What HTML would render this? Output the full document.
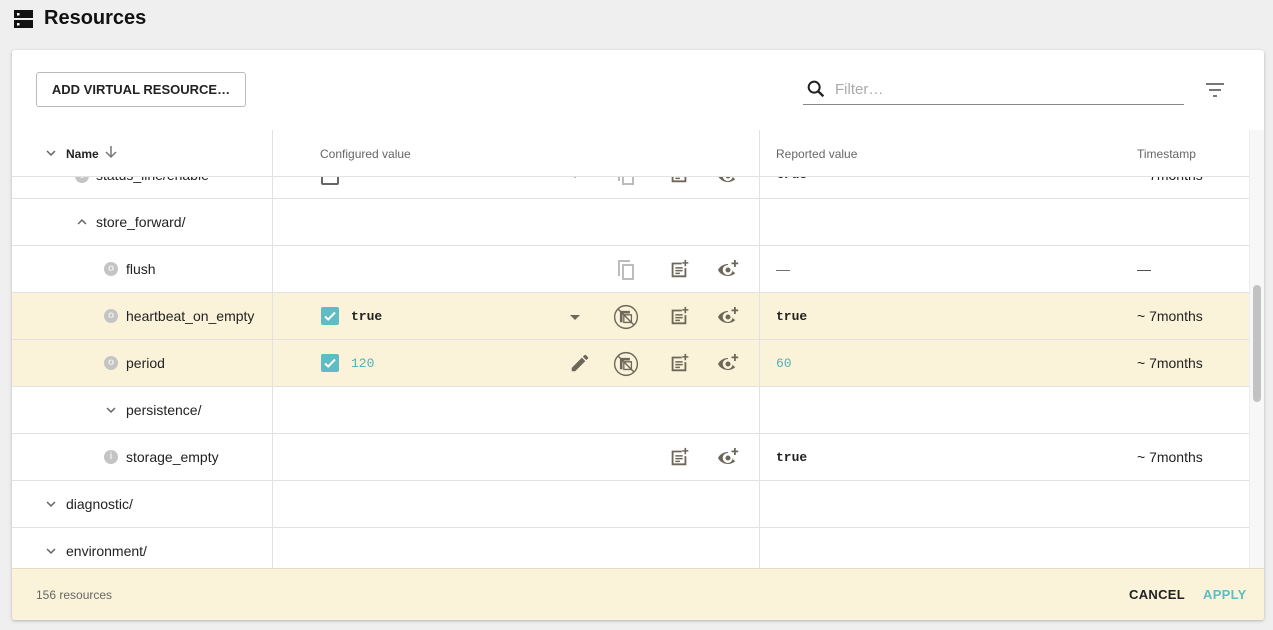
<!DOCTYPE html>
<html><head><meta charset="utf-8"><style>
*{box-sizing:border-box;margin:0;padding:0}
body{width:1273px;height:630px;background:#efefef;font-family:"Liberation Sans",Arial,sans-serif;color:#222;position:relative;overflow:hidden}
.abs{position:absolute}
.title{left:44px;top:7px;font-size:20px;font-weight:bold;color:#111}
.card{left:12px;top:50px;width:1252px;height:570px;background:#fff;border-radius:3px;box-shadow:0 1px 3px rgba(0,0,0,.25);overflow:hidden}
.btn{left:24px;top:22px;width:210px;height:35px;border:1px solid #bbb;border-radius:3px;font-size:13px;font-weight:bold;letter-spacing:0;color:#222;text-align:center;line-height:33px}
.hdr{font-size:12px;color:#666}
.row{position:absolute;left:0;width:1237px;height:47px;border-bottom:1px solid #e2e2e2}
.row.hl{background:#fbf3d9}
.t{position:absolute;top:0;line-height:46px;font-size:14px;color:#222}
.mono{font-family:"Liberation Mono",monospace;font-size:13px;font-weight:bold}
.teal{color:#4fb0b8;font-weight:normal}
.vl{position:absolute;top:0;width:1px;background:#e2e2e2}
.ic{position:absolute}
.cb{position:absolute;width:18px;height:18px;background:#5fbcc4;border-radius:2px;top:14px;left:309px}
.dot{position:absolute;width:14px;height:14px;border-radius:50%;background:#c4c4c4;top:16px;color:#eee;font-size:10px;font-weight:bold;text-align:center;line-height:14px}
.foot{left:0;top:518px;width:1252px;height:52px;background:#fbf3d9;border-top:1px solid #e6dcc0}
</style></head><body>
<svg width="0" height="0" style="position:absolute">
<defs>
<symbol id="chevd" viewBox="0 0 24 24"><path d="M7.4 8.6 12 13.2l4.6-4.6L18 10l-6 6-6-6z" fill="#666"/></symbol>
<symbol id="chevu" viewBox="0 0 24 24"><path d="M7.4 15.4 12 10.8l4.6 4.6L18 14l-6-6-6 6z" fill="#666"/></symbol>
<symbol id="note" viewBox="0 0 24 24"><path d="M4 5h11v2H6v12h12v-8h2v10H4z M8 10h8v1.6H8z M8 13h8v1.6H8z M8 16h5v1.6H8z M18 2h1.8v2.5h2.4v1.7h-2.4V9H18V6.2h-2.5V4.5H18z" fill="#6d6759"/></symbol>
<symbol id="eye" viewBox="0 0 24 24"><path d="M12 7C7 7 3.5 10 2 13c1.5 3 5 6 10 6 3 0 5.5-1.2 7.3-3-1.3-.4-2.3-1.4-2.6-2.7A5 5 0 1 1 12 8z M12 10.5a2.5 2.5 0 1 0 0 5 2.5 2.5 0 0 0 0-5z" fill="#6d6759"/><path d="M18 3h1.8v2.5h2.4v1.7h-2.4V10H18V7.2h-2.5V5.5H18z" fill="#6d6759"/></symbol>
<symbol id="copy" viewBox="0 0 24 24"><path d="M4 4h2v14H4z M4 2h12v2H4z M8 6h12v16H8z M10 8v12h8V8z" fill="#bdbdbd"/></symbol>
<symbol id="nocopy" viewBox="0 0 24 24"><circle cx="12" cy="12" r="10.5" fill="none" stroke="#6d6759" stroke-width="1.3"/><path d="M7 7h8v1.2H8.2v8H7z M10 10h7v7h-7z" fill="none" stroke="#6d6759" stroke-width="1.2"/><path d="M5 5l14 14" stroke="#6d6759" stroke-width="1.3"/></symbol>
<symbol id="pen" viewBox="0 0 24 24"><path d="M3 17.25V21h3.75L17.8 9.94l-3.75-3.75zM20.7 7.04a1 1 0 0 0 0-1.41l-2.34-2.34a1 1 0 0 0-1.41 0l-1.83 1.83 3.75 3.75z" fill="#6d6759"/></symbol>
<symbol id="drop" viewBox="0 0 24 24"><path d="M7 10l5 5 5-5z" fill="#6d6759"/></symbol>
</defs></svg>

<svg class="abs" style="left:14px;top:9px" width="20" height="20" viewBox="0 0 20 20"><rect x="0" y="1" width="19" height="8" fill="#111"/><rect x="0" y="11" width="19" height="8" fill="#111"/><rect x="3" y="4" width="2.5" height="2.5" fill="#fff"/><rect x="3" y="14" width="2.5" height="2.5" fill="#fff"/></svg>
<div class="abs title">Resources</div>

<div class="abs card">
  <div class="abs btn">ADD VIRTUAL RESOURCE…</div>
  <svg class="abs" style="left:793px;top:28px" width="22" height="22" viewBox="0 0 24 24"><circle cx="10" cy="10" r="6" fill="none" stroke="#222" stroke-width="2.2"/><path d="M14.5 14.5 20 20" stroke="#222" stroke-width="2.6"/></svg>
  <div class="abs" style="left:823px;top:31px;font-size:15px;color:#aaa">Filter…</div>
  <div class="abs" style="left:791px;top:54px;width:381px;height:1px;background:#888"></div>
  <svg class="abs" style="left:1192px;top:30px" width="24" height="20" viewBox="0 0 24 20"><rect x="2" y="3" width="18" height="2" fill="#777"/><rect x="5" y="9" width="12" height="2" fill="#777"/><rect x="9" y="15" width="4" height="2" fill="#777"/></svg>

  <div class="abs" style="left:0;top:127px;width:1237px;height:391px;overflow:hidden">
    <div class="row" style="top:-25px">
      <div class="dot" style="left:63px;top:17px">o</div><div class="t" style="left:84px">status_line/enable</div>
      <div class="abs" style="left:309px;top:15px;width:18px;height:18px;border:2px solid #666;border-radius:2px"></div>
      <svg class="ic" style="left:551px;top:11px" width="24" height="24"><use href="#drop"/></svg>
      <svg class="ic" style="left:602px;top:11px" width="24" height="24"><use href="#copy"/></svg>
      <svg class="ic" style="left:656px;top:11px" width="22" height="22"><use href="#note"/></svg>
      <svg class="ic" style="left:704px;top:11px" width="24" height="24"><use href="#eye"/></svg>
      <div class="t mono" style="left:764px">true</div><div class="t" style="left:1125px">~ 7months</div>
    </div>
    <div class="row" style="top:22px"><svg class="ic" style="left:61px;top:14px" width="18" height="18"><use href="#chevu"/></svg><div class="t" style="left:84px">store_forward/</div></div>
    <div class="row" style="top:69px">
      <div class="dot" style="left:92px">o</div><div class="t" style="left:114px">flush</div>
      <svg class="ic" style="left:602px;top:12px" width="24" height="24"><use href="#copy"/></svg>
      <svg class="ic" style="left:656px;top:12px" width="22" height="22"><use href="#note"/></svg>
      <svg class="ic" style="left:704px;top:11px" width="24" height="24"><use href="#eye"/></svg>
      <div class="t" style="left:764px;color:#666">—</div><div class="t" style="left:1125px;color:#444">—</div>
    </div>
    <div class="row hl" style="top:116px">
      <div class="dot" style="left:92px">o</div><div class="t" style="left:114px">heartbeat_on_empty</div>
      <div class="cb"><svg width="18" height="18" viewBox="0 0 18 18"><path d="M4 9.5l3.2 3L14 5.5" fill="none" stroke="#fff" stroke-width="2"/></svg></div>
      <div class="t mono" style="left:339px;top:1px">true</div>
      <svg class="ic" style="left:551px;top:12px" width="24" height="24"><use href="#drop"/></svg>
      <svg class="ic" style="left:601px;top:11px" width="26" height="26"><use href="#nocopy"/></svg>
      <svg class="ic" style="left:656px;top:12px" width="22" height="22"><use href="#note"/></svg>
      <svg class="ic" style="left:704px;top:11px" width="24" height="24"><use href="#eye"/></svg>
      <div class="t mono" style="left:764px;top:1px">true</div><div class="t" style="left:1125px">~ 7months</div>
    </div>
    <div class="row hl" style="top:163px">
      <div class="dot" style="left:92px">o</div><div class="t" style="left:114px">period</div>
      <div class="cb"><svg width="18" height="18" viewBox="0 0 18 18"><path d="M4 9.5l3.2 3L14 5.5" fill="none" stroke="#fff" stroke-width="2"/></svg></div>
      <div class="t mono teal" style="left:339px;top:1px">120</div>
      <svg class="ic" style="left:557px;top:12px" width="22" height="22"><use href="#pen"/></svg>
      <svg class="ic" style="left:601px;top:11px" width="26" height="26"><use href="#nocopy"/></svg>
      <svg class="ic" style="left:656px;top:12px" width="22" height="22"><use href="#note"/></svg>
      <svg class="ic" style="left:704px;top:11px" width="24" height="24"><use href="#eye"/></svg>
      <div class="t mono teal" style="left:764px;top:1px">60</div><div class="t" style="left:1125px">~ 7months</div>
    </div>
    <div class="row" style="top:210px"><svg class="ic" style="left:90px;top:14px" width="18" height="18"><use href="#chevd"/></svg><div class="t" style="left:114px">persistence/</div></div>
    <div class="row" style="top:257px">
      <div class="dot" style="left:92px">i</div><div class="t" style="left:114px">storage_empty</div>
      <svg class="ic" style="left:656px;top:12px" width="22" height="22"><use href="#note"/></svg>
      <svg class="ic" style="left:704px;top:11px" width="24" height="24"><use href="#eye"/></svg>
      <div class="t mono" style="left:764px;top:1px">true</div><div class="t" style="left:1125px">~ 7months</div>
    </div>
    <div class="row" style="top:304px"><svg class="ic" style="left:30px;top:14px" width="18" height="18"><use href="#chevd"/></svg><div class="t" style="left:54px">diagnostic/</div></div>
    <div class="row" style="top:351px"><svg class="ic" style="left:30px;top:14px" width="18" height="18"><use href="#chevd"/></svg><div class="t" style="left:54px">environment/</div></div>
    <div class="vl" style="left:260px;height:391px"></div>
    <div class="vl" style="left:747px;height:391px"></div>
  </div>

  <div class="abs" style="left:0;top:80px;width:1237px;height:47px;background:#fff;border-bottom:1px solid #e2e2e2">
    <svg class="ic" style="left:30px;top:14px" width="18" height="18"><use href="#chevd"/></svg>
    <div class="abs hdr" style="left:54px;top:17px;color:#222;font-weight:bold;font-size:12px">Name</div>
    <svg class="abs" style="left:92px;top:14px" width="14" height="16" viewBox="0 0 14 16"><path d="M7 2v11M2 8l5 5 5-5" fill="none" stroke="#777" stroke-width="1.5"/></svg>
    <div class="abs hdr" style="left:308px;top:17px">Configured value</div>
    <div class="abs hdr" style="left:764px;top:17px">Reported value</div>
    <div class="abs hdr" style="left:1125px;top:17px">Timestamp</div>
    <div class="vl" style="left:260px;height:47px"></div>
    <div class="vl" style="left:747px;height:47px"></div>
  </div>

  <div class="abs" style="left:1237px;top:80px;width:15px;height:438px;background:#f7f7f7;border-left:1px solid #ececec"></div>
  <div class="abs" style="left:1241px;top:235px;width:8px;height:117px;background:#c2c2c2;border-radius:4px"></div>

  <div class="abs foot">
    <div class="abs" style="left:24px;top:19px;font-size:12px;color:#666">156 resources</div>
    <div class="abs" style="left:1117px;top:18px;font-size:13px;font-weight:bold;color:#222;letter-spacing:.3px">CANCEL</div>
    <div class="abs" style="left:1191px;top:18px;font-size:13px;font-weight:bold;color:#5fbcc4;letter-spacing:.3px">APPLY</div>
  </div>
</div>
</body></html>
